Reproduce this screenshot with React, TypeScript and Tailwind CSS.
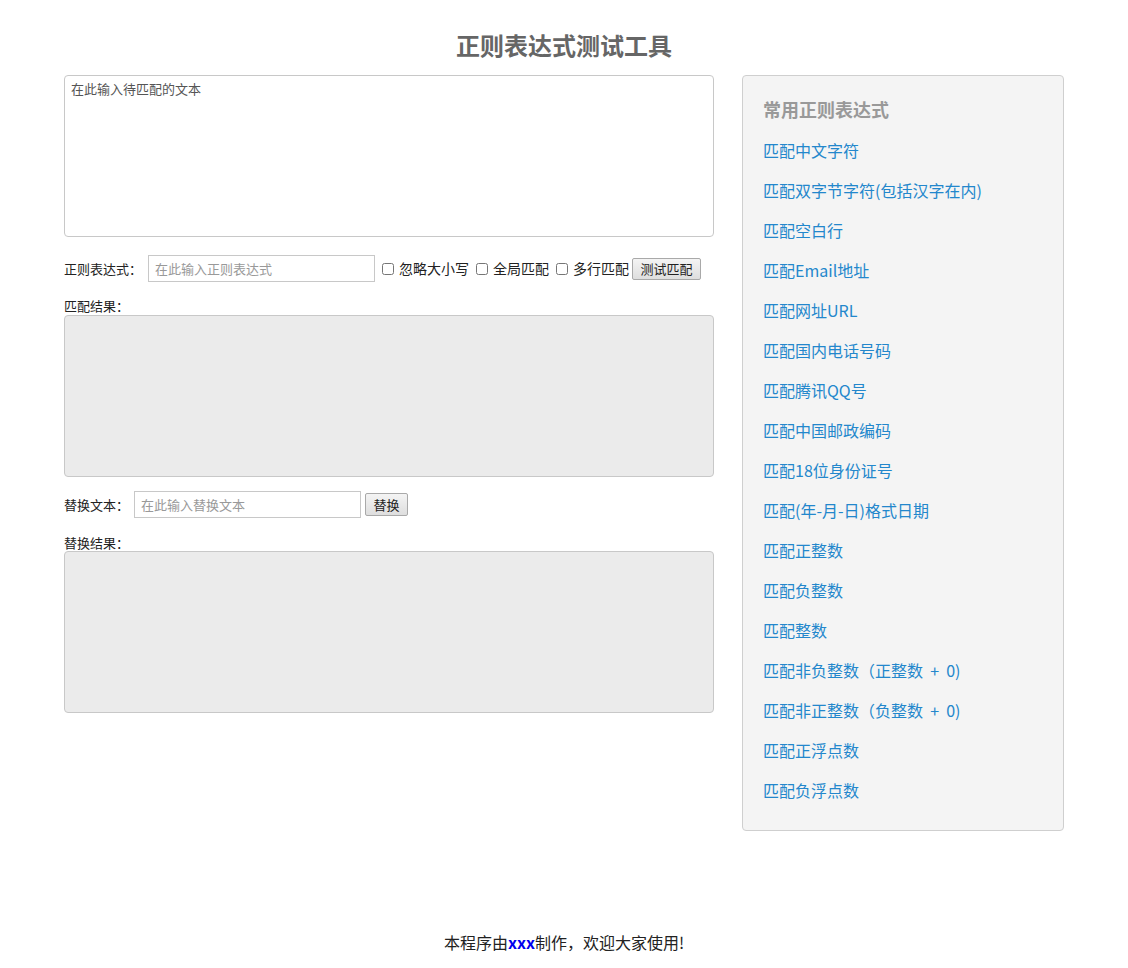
import { useState } from 'react'

const patterns = [
  '匹配中文字符',
  '匹配双字节字符(包括汉字在内)',
  '匹配空白行',
  '匹配Email地址',
  '匹配网址URL',
  '匹配国内电话号码',
  '匹配腾讯QQ号',
  '匹配中国邮政编码',
  '匹配18位身份证号',
  '匹配(年-月-日)格式日期',
  '匹配正整数',
  '匹配负整数',
  '匹配整数',
  '匹配非负整数（正整数 + 0)',
  '匹配非正整数（负整数 + 0)',
  '匹配正浮点数',
  '匹配负浮点数',
]

const font = { fontFamily: '"Noto Sans CJK SC", "Noto Sans", sans-serif' }

function Check({ label }: { label: string }) {
  const [on, setOn] = useState(false)
  return (
    <label className="flex items-center ml-[7px]">
      <input
        type="checkbox"
        checked={on}
        onChange={() => setOn(!on)}
        className="w-[12px] h-[12px] m-0 mr-[5px] accent-gray-400"
      />
      <span className="text-[14px]">{label}</span>
    </label>
  )
}

export default function App() {
  const [text, setText] = useState('')
  const [regex, setRegex] = useState('')
  const [replaceText, setReplaceText] = useState('')

  return (
    <div className="w-[1000px] mx-auto text-[13px] text-[#222]" style={font}>
      <h1 className="pt-[28px] mb-[13px] text-center text-[24px] leading-[34px] font-bold text-[#666]">
        正则表达式测试工具
      </h1>

      <div className="flex gap-[28px] items-start">
        {/* left column */}
        <div className="w-[650px]">
          <textarea
            value={text}
            onChange={(e) => setText(e.target.value)}
            placeholder="在此输入待匹配的文本"
            className="block w-full h-[162px] border border-[#c8c8c8] rounded-[4px] px-[6px] py-[3px] text-[13px] resize-none outline-none placeholder:text-[#555]"
          />

          <div className="flex items-center mt-[18px] h-[27px]">
            <span className="mr-[6px]">正则表达式：</span>
            <input
              value={regex}
              onChange={(e) => setRegex(e.target.value)}
              placeholder="在此输入正则表达式"
              className="w-[227px] h-[27px] border border-[#c8c8c8] px-[6px] text-[13px] outline-none placeholder:text-[#999]"
            />
            <Check label="忽略大小写" />
            <Check label="全局匹配" />
            <Check label="多行匹配" />
            <button className="ml-[3px] h-[22px] w-[69px] border border-[#a9a9a9] rounded-[2px] bg-gradient-to-b from-[#f4f4f4] to-[#dedede] text-[13px]">
              测试匹配
            </button>
          </div>

          <div className="mt-[14px] leading-[19px]">匹配结果：</div>
          <div className="h-[162px] border border-[#c8c8c8] rounded-[4px] bg-[#ebebeb]" />

          <div className="flex items-center mt-[14px] h-[27px]">
            <span className="mr-[5px]">替换文本：</span>
            <input
              value={replaceText}
              onChange={(e) => setReplaceText(e.target.value)}
              placeholder="在此输入替换文本"
              className="w-[227px] h-[27px] border border-[#c8c8c8] px-[6px] text-[13px] outline-none placeholder:text-[#999]"
            />
            <button className="ml-[4px] h-[23px] w-[43px] border border-[#a9a9a9] rounded-[2px] bg-gradient-to-b from-[#f4f4f4] to-[#dedede] text-[13px]">
              替换
            </button>
          </div>

          <div className="mt-[16px] leading-[17px]">替换结果：</div>
          <div className="h-[162px] border border-[#c8c8c8] rounded-[4px] bg-[#ebebeb]" />
        </div>

        {/* right column */}
        <div className="w-[322px] border border-[#cfcfcf] rounded-[4px] bg-[#f4f4f4] p-5">
          <h2 className="text-[18px] leading-[26px] font-bold text-[#999]">常用正则表达式</h2>
          <ul className="mt-2">
            {patterns.map((p) => (
              <li key={p} className="h-10 flex items-center">
                <a href="#" className="text-[16px] text-[#2387cc] whitespace-pre">
                  {p.replace(' + ', '  +  ')}
                </a>
              </li>
            ))}
          </ul>
        </div>
      </div>

      <footer className="mt-[100px] pb-[16px] text-center text-[16px] leading-[22px] text-[#222]">
        本程序由<b className="text-[#0000ee]">xxx</b>制作，欢迎大家使用!
      </footer>
    </div>
  )
}
